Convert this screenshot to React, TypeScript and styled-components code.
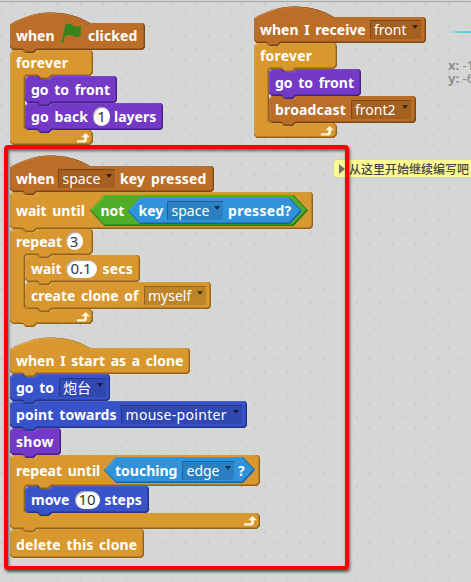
import React, { useId } from 'react';
import styled, { createGlobalStyle, css } from 'styled-components';

const GlobalStyle = createGlobalStyle`
  * { box-sizing: border-box; }
  html, body { margin: 0; padding: 0; overflow: hidden; background: #d5d7d6; }
`;

type Kind = 'events' | 'control' | 'looks' | 'motion' | 'operators' | 'sensing';

const palette: Record<Kind, { fill: string; light: string; dark: string; slot: string; slotEdge: string; arrow: string }> = {
  events: { fill: '#bb6e27', light: '#c97f3b', dark: '#7d4616', slot: '#a55f20', slotEdge: '#7f4817', arrow: '#3f240c' },
  control: { fill: '#d8982f', light: '#e6ae50', dark: '#93631a', slot: '#bd8429', slotEdge: '#91651e', arrow: '#4a3310' },
  looks: { fill: '#7539c8', light: '#8b55d8', dark: '#482083', slot: '#6530ae', slotEdge: '#4c2484', arrow: '#28124a' },
  motion: { fill: '#3853c9', light: '#5570de', dark: '#213484', slot: '#3048b0', slotEdge: '#233687', arrow: '#121c49' },
  operators: { fill: '#4fad27', light: '#63c03b', dark: '#2f7412', slot: '#439521', slotEdge: '#337318', arrow: '#193a0c' },
  sensing: { fill: '#3192dc', light: '#4ea8ec', dark: '#1c629a', slot: '#2b80c2', slotEdge: '#1e6096', arrow: '#103350' },
};

/* ---------- block outlines ---------- */

const TAB = 13;
const MOUTH_X = 15;
const ARM = 15;

const dent = (x: number, y: number) => `L${x} ${y} L${x + 3} ${y + 3} H${x + 11} L${x + 14} ${y}`;
const tab = (x: number, y: number) => `L${x + 14} ${y} L${x + 11} ${y + 3} H${x + 3} L${x} ${y}`;

const topEdge = (w: number, hat?: boolean) =>
  hat
    ? `M0 1.5 C12 -6 27 -10.5 40 -10.5 C56 -10.5 69 -6.5 80 0 H${w - 3} Q${w - 0.5} 0.5 ${w} 3`
    : `M0 3 L3 0 ${dent(TAB, 0)} H${w - 3} Q${w - 0.5} 0.5 ${w} 3`;

const blockPath = (w: number, h: number, hat?: boolean, cap?: boolean) =>
  `${topEdge(w, hat)} V${h - 3} Q${w - 0.5} ${h - 0.5} ${w - 3} ${h} ${cap ? '' : tab(TAB, h)} H3 L0 ${h - 3} Z`;

const loopPath = (w: number, head: number, mouth: number, arm: number, cap?: boolean) => {
  const m = head + mouth;
  const h = m + arm;
  return `${topEdge(w)} V${head - 3} L${w - 3} ${head} ${tab(MOUTH_X + TAB, head)} H${MOUTH_X + 2} L${MOUTH_X} ${head + 2}
    V${m - 2} L${MOUTH_X + 2} ${m} ${dent(MOUTH_X + TAB, m)} H${w - 3} L${w} ${m + 3} V${h - 3} L${w - 3} ${h}
    ${cap ? '' : tab(TAB, h)} H3 L0 ${h - 3} Z`;
};

const hexPath = (w: number, h: number) => {
  const s = h / 2 - 1;
  return `M0 ${h / 2} L${s} 0 H${w - s} L${w} ${h / 2} L${w - s} ${h} H${s} Z`;
};

const Outline = styled.svg`
  position: absolute;
  left: 0;
  top: 0;
  width: 1px;
  height: 1px;
  overflow: visible;
  pointer-events: none;
`;

function Shape({ d, kind }: { d: string; kind: Kind }) {
  const id = useId();
  const c = palette[kind];
  return (
    <Outline aria-hidden>
      <clipPath id={id}><path d={d} /></clipPath>
      <path d={d} fill={c.fill} />
      <g clipPath={`url(#${id})`} fill="none">
        <path d={d} stroke={c.light} strokeWidth="1.1" transform="translate(.5 .5)" />
        <path d={d} stroke={c.dark} strokeWidth="1.6" transform="translate(-.6 -.6)" />
      </g>
    </Outline>
  );
}

/* ---------- block parts ---------- */

const Canvas = styled.main`
  position: relative;
  width: 471px;
  height: 582px;
  overflow: hidden;
  background: #d5d7d6;
  font: 14px/19px 'Noto Sans', 'Noto Sans CJK SC', sans-serif;
`;

const Grid = styled.svg`
  position: absolute;
  inset: 0;
  width: 100%;
  height: 100%;
`;

const Divider = styled.div`
  position: absolute;
  inset: 0 0 auto;
  height: 2px;
  border-bottom: 1px solid #a3a7a6;
`;

const Script = styled.section<{ $x: number; $y: number }>`
  position: absolute;
  left: ${(p) => p.$x}px;
  top: ${(p) => p.$y}px;
  display: flex;
  flex-direction: column;
  align-items: flex-start;
`;

const BlockBox = styled.div<{ $w: number; $h: number }>`
  position: relative;
  flex: none;
  width: ${(p) => p.$w}px;
  height: ${(p) => p.$h}px;
`;

const Row = styled.div<{ $h: number }>`
  position: relative;
  display: flex;
  align-items: center;
  height: ${(p) => p.$h}px;
  padding-left: 6px;
`;

const Mouth = styled.div<{ $gap: number }>`
  display: flex;
  flex-direction: column;
  align-items: flex-start;
  padding: ${(p) => p.$gap}px 0 0 ${MOUTH_X}px;
`;

const Arm = styled.div<{ $h: number }>`
  position: relative;
  display: flex;
  justify-content: flex-end;
  height: ${(p) => p.$h}px;
  padding: 3px 3px 0 0;
`;

const Label = styled.span<{ $w?: number; $ls?: number }>`
  flex: none;
  ${(p) => p.$w && css`width: ${p.$w}px;`}
  color: #fff;
  font-weight: 700;
  letter-spacing: ${(p) => p.$ls ?? 0}px;
  word-spacing: 2px;
  white-space: nowrap;
`;

const Slot = styled.span<{ $kind: Kind; $w: number; $gap?: number; $ls?: number }>`
  flex: none;
  display: flex;
  justify-content: space-between;
  width: ${(p) => p.$w}px;
  height: 19px;
  margin-right: ${(p) => p.$gap ?? 0}px;
  padding: 0 3px 0 3.5px;
  color: #fff;
  line-height: 18px;
  letter-spacing: ${(p) => p.$ls ?? 0}px;
  white-space: nowrap;
  background: ${(p) => palette[p.$kind].slot};
  border: solid ${(p) => palette[p.$kind].slotEdge};
  border-width: 1px 0 0 1px;
`;

const Caret = styled.i<{ $kind: Kind }>`
  flex: none;
  margin-top: 4px;
  width: 0;
  height: 0;
  border: solid transparent;
  border-width: 4.5px 3.5px 0;
  border-top-color: ${(p) => palette[p.$kind].arrow};
`;

const Num = styled.span<{ $w: number; $h?: number; $gap?: number }>`
  flex: none;
  display: flex;
  justify-content: center;
  align-items: center;
  width: ${(p) => p.$w}px;
  height: ${(p) => p.$h ?? 18}px;
  margin-right: ${(p) => p.$gap ?? 0}px;
  color: #33373b;
  font-size: 15px;
  background: #fff;
  border-radius: 9px;
  box-shadow: inset 1px 1px 1px rgba(60, 50, 60, 0.45);
`;

const HexBox = styled.div<{ $w: number; $h: number; $pad: number }>`
  position: relative;
  flex: none;
  display: flex;
  align-items: center;
  width: ${(p) => p.$w}px;
  height: ${(p) => p.$h}px;
  padding-left: ${(p) => p.$pad}px;
  > :not(svg) { position: relative; }
`;

const Flag = styled.svg`
  flex: none;
  width: 21px;
  height: 21px;
  margin: 0 6px 4px 0;
`;

type MenuProps = { kind: Kind; w: number; gap?: number; ls?: number; children: string };

function Menu({ kind, w, gap, ls, children }: MenuProps) {
  return <Slot $kind={kind} $w={w} $gap={gap} $ls={ls}>{children}<Caret $kind={kind} /></Slot>;
}

type BlockProps = { kind: Kind; w: number; h?: number; row?: number; hat?: boolean; cap?: boolean; children: React.ReactNode };

function Block({ kind, w, h = 27, row = h, hat, cap, children }: BlockProps) {
  return (
    <BlockBox $w={w} $h={h}>
      <Shape kind={kind} d={blockPath(w, h, hat, cap)} />
      <Row $h={row}>{children}</Row>
    </BlockBox>
  );
}

type LoopProps = { w: number; head: number; row: number; mouth: number; arm?: number; cap?: boolean; title: React.ReactNode; children: React.ReactNode };

function Loop({ w, head, row, mouth, arm = ARM, cap, title, children }: LoopProps) {
  return (
    <BlockBox $w={w} $h={head + mouth + arm}>
      <Shape kind="control" d={loopPath(w, head, mouth, arm, cap)} />
      <Row $h={row}>{title}</Row>
      <Mouth $gap={head - row}>{children}</Mouth>
      <Arm $h={arm}>
        <svg width="13" height="10" viewBox="0 0 13 10" aria-label="loop">
          <path d="M0 7.2 H6 Q7.2 7.2 7.2 5.8 V4.2 H4.3 L8.6 0 L12.9 4.2 H10 V6.8 Q10 9.4 7.4 9.4 H0 Z" fill="#fff3d6" />
        </svg>
      </Arm>
    </BlockBox>
  );
}

function Hex({ kind, w, h, pad, children }: { kind: Kind; w: number; h: number; pad: number; children: React.ReactNode }) {
  return (
    <HexBox $w={w} $h={h} $pad={pad}>
      <Shape kind={kind} d={hexPath(w, h)} />
      {children}
    </HexBox>
  );
}

/* ---------- overlays ---------- */

const Highlight = styled.div`
  position: absolute;
  left: 4px;
  top: 145px;
  width: 345px;
  height: 425px;
  border: 4px solid #fe0000;
  border-radius: 4px;
  box-shadow: 1px 2px 3px rgba(0, 0, 0, 0.6), inset 1px 2px 3px rgba(0, 0, 0, 0.55);
`;

const Comment = styled.div`
  position: absolute;
  left: 333px;
  top: 159px;
  display: flex;
  align-items: center;
  gap: 4px;
  width: 150px;
  height: 19px;
  padding-left: 5px;
  color: #454545;
  font: 500 12px/17px 'Noto Sans CJK SC', sans-serif;
  white-space: nowrap;
  background: #fffb93;
  border: 1px solid #d5d5b4;
  border-radius: 4px;
`;

const Expand = styled.i`
  flex: none;
  border: solid transparent;
  border-width: 5px 0 5px 6px;
  border-left-color: #6d6d6d;
`;

const Beam = styled.div`
  position: absolute;
  left: 447px;
  top: 31px;
  width: 24px;
  height: 2px;
  background: linear-gradient(90deg, rgba(84, 214, 222, 0), #54d6de 60%);
`;

const Position = styled.div`
  position: absolute;
  left: 448px;
  top: 59px;
  color: #8d8f8f;
  font: 700 13px/13px 'Noto Sans', sans-serif;
  white-space: nowrap;
`;

const Value = styled.span`
  font-weight: 500;
`;

export default function App() {
  return (
    <Canvas>
      <GlobalStyle />
      <Grid aria-hidden>
        <defs>
          <pattern id="marks" width="23" height="23" patternUnits="userSpaceOnUse">
            <path d="M10 3.5h3M11.5 2v3M0 13.5h3M1.5 12v3" stroke="#cacccb" fill="none" />
          </pattern>
        </defs>
        <rect width="100%" height="100%" fill="url(#marks)" />
      </Grid>
      <Divider />
      <Beam />
      <Position>
        <div>x: <Value>-1</Value></div>
        <div>y: <Value>-6</Value></div>
      </Position>

      <Script $x={10} $y={23}>
        <Block kind="events" w={135} h={27} row={25} hat>
          <Label $w={45}>when</Label>
          <Flag viewBox="0 0 21 21" aria-label="green flag">
            <path d="M4.6 1.2 C8 -.2 10 1 12 2.4 C14.500 4 17 3.600 20 2.800 L19.600 13 C16 14.800 13.500 13.800 11.500 12.800 C8.500 11.400 6.500 11.800 3.900 13 L2.400 20 L.400 20 Z" fill="#36841b" />
          </Flag>
          <Label $ls={0.1}>clicked</Label>
        </Block>
        <Loop w={83} head={26} row={25} mouth={54} arm={15} cap title={<Label $ls={0.2}>forever</Label>}>
          <Block kind="looks" w={92}><Label>go to front</Label></Block>
          <Block kind="looks" w={138}>
            <Label $w={62} $ls={0.1}>go back</Label>
            <Num $w={17} $h={19} $gap={4}>1</Num>
            <Label>layers</Label>
          </Block>
        </Loop>
      </Script>

      <Script $x={254} $y={17}>
        <Block kind="events" w={172} h={26} row={25} hat>
          <Label $w={109.5}>when I receive</Label>
          <Menu kind="events" w={51}>front</Menu>
        </Block>
        <Loop w={83} head={26} row={25} mouth={54} cap title={<Label $ls={0.2}>forever</Label>}>
          <Block kind="looks" w={92}><Label>go to front</Label></Block>
          <Block kind="events" w={147}>
            <Label $w={75.5} $ls={0.15}>broadcast</Label>
            <Menu kind="events" w={60}>front2</Menu>
          </Block>
        </Loop>
      </Script>

      <Script $x={10} $y={166}>
        <Block kind="events" w={204} h={26} row={25} hat>
          <Label $w={42}>when</Label>
          <Menu kind="events" w={57} gap={5}>space</Menu>
          <Label $ls={0.15}>key pressed</Label>
        </Block>
        <Block kind="control" w={303} h={37}>
          <Label $w={74}>wait until</Label>
          <Hex kind="operators" w={218} h={31} pad={10.5}>
            <Label $w={27}>not</Label>
            <Hex kind="sensing" w={174} h={26} pad={11}>
              <Label $w={28.5}>key</Label>
              <Menu kind="sensing" w={56} gap={5}>space</Menu>
              <Label $ls={0.3}>pressed?</Label>
            </Hex>
          </Hex>
        </Block>
        <Loop
          w={83} head={26} row={24} mouth={54}
          title={<><Label $w={49.5}>repeat</Label><Num $w={17}>3</Num></>}
        >
          <Block kind="control" w={115}>
            <Label $w={34.5}>wait</Label>
            <Num $w={31} $gap={6}>0.1</Num>
            <Label $ls={0.2}>secs</Label>
          </Block>
          <Block kind="control" w={186}>
            <Label $w={112.5}>create clone of</Label>
            <Menu kind="control" w={62}>myself</Menu>
          </Block>
        </Loop>
      </Script>

      <Script $x={10} $y={348}>
        <Block kind="control" w={180} h={26} row={25} hat><Label>when I start as a clone</Label></Block>
        <Block kind="motion" w={100}>
          <Label $w={42.5}>go to</Label>
          <Menu kind="motion" w={47}>炮台</Menu>
        </Block>
        <Block kind="motion" w={237}>
          <Label $w={105} $ls={0.1}>point towards</Label>
          <Menu kind="motion" w={121} ls={0.3}>mouse-pointer</Menu>
        </Block>
        <Block kind="looks" w={51}><Label $ls={0.3}>show</Label></Block>
        <Loop
          w={250} head={31} row={30} mouth={27} arm={16}
          title={
            <>
              <Label $w={88}>repeat until</Label>
              <Hex kind="sensing" w={151} h={26} pad={11}>
                <Label $w={67}>touching</Label>
                <Menu kind="sensing" w={52} gap={4}>edge</Menu>
                <Label>?</Label>
              </Hex>
            </>
          }
        >
          <Block kind="motion" w={124}>
            <Label $w={43.5}>move</Label>
            <Num $w={25} $gap={5}>10</Num>
            <Label>steps</Label>
          </Block>
        </Loop>
        <Block kind="control" w={134} h={29} row={31} cap><Label $ls={0.1}>delete this clone</Label></Block>
      </Script>

      <Comment><Expand />从这里开始继续编写吧</Comment>
      <Highlight />
    </Canvas>
  );
}
